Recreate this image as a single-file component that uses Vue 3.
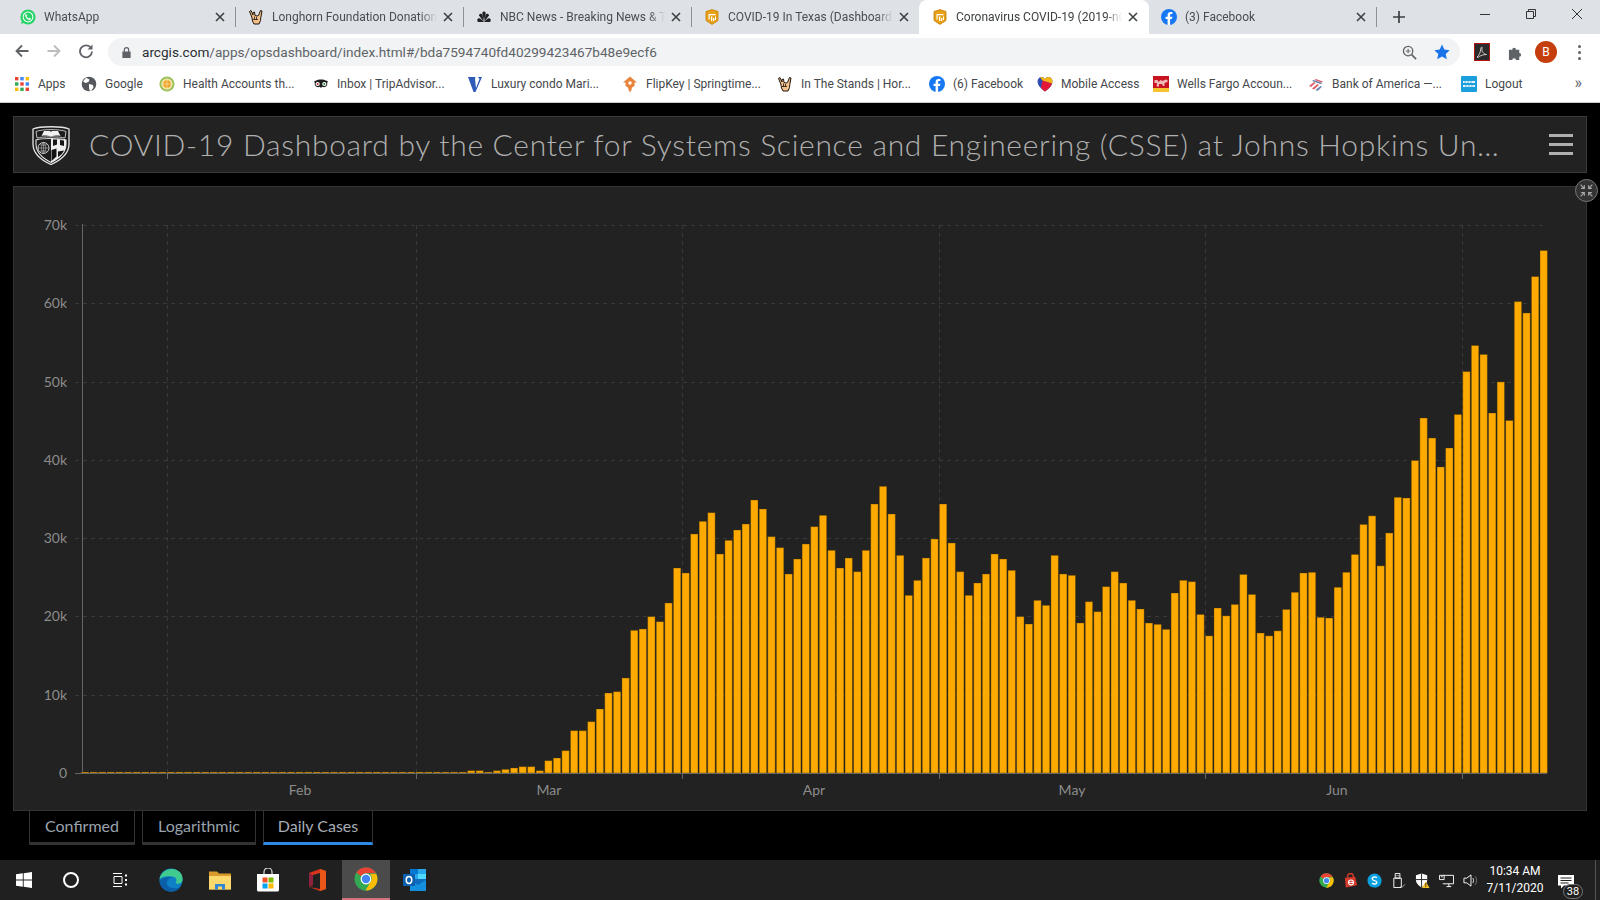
<script setup>
const tabs = [
  { title: 'WhatsApp', icon: 'whatsapp' },
  { title: 'Longhorn Foundation Donation', icon: 'horns' },
  { title: 'NBC News - Breaking News & Top Stories', icon: 'nbc' },
  { title: 'COVID-19 In Texas (Dashboard)', icon: 'dash' },
  { title: 'Coronavirus COVID-19 (2019-nCoV)', icon: 'dash', active: true },
  { title: '(3) Facebook', icon: 'fb' }
]

const bookmarks = [
  { label: 'Apps', icon: 'apps', w: 67 },
  { label: 'Google', icon: 'globe', w: 78 },
  { label: 'Health Accounts th...', icon: 'health', w: 154 },
  { label: 'Inbox | TripAdvisor...', icon: 'owl', w: 154 },
  { label: 'Luxury condo Mari...', icon: 'lux', w: 155 },
  { label: 'FlipKey | Springtime...', icon: 'flip', w: 155 },
  { label: 'In The Stands | Hor...', icon: 'horns', w: 152 },
  { label: '(6) Facebook', icon: 'fb', w: 108 },
  { label: 'Mobile Access', icon: 'sw', w: 116 },
  { label: 'Wells Fargo Accoun...', icon: 'wf', w: 155 },
  { label: 'Bank of America —...', icon: 'boa', w: 153 },
  { label: 'Logout', icon: 'amex', w: 70 }
]

const icons = {
  whatsapp: '<circle cx="8" cy="8" r="7.6" fill="#25d366"/><path d="M1 15l1.2-4 2.6 2.6z" fill="#25d366"/><circle cx="8" cy="8" r="5.4" fill="#fff"/><circle cx="8" cy="8" r="4.4" fill="#25d366"/><path d="M6 5c-.8.6-1 1.6-.4 2.9.7 1.4 2 2.6 3.400 3 1 .2 1.700-.3 2-1.200l-1.500-.9-.7.700c-1-.4-1.800-1.200-2.200-2.200l.6-.7z" fill="#fff"/>',
  horns: '<path d="M1.500 2.500 3 1.500 5 6V3.500L6.500 3 7 6.500 9 7l1.500-.5 2-5 1.500.5-1.200 6.500-.3 3-1.500 3.500H6L4.500 12 3.800 8z" fill="#f3c08c" stroke="#1c140c" stroke-width="1"/><path d="M6.500 7.500v3M8.500 8v2.500M5 10.500h5" stroke="#1c140c" stroke-width=".8" fill="none"/>',
  nbc: '<g fill="#1f2125"><path d="M8 13H2C.5 11.500 1.500 8.500 4 9.500L6.500 11.500z"/><path d="M7.500 12.500 3 6.500C3 4.500 5.500 4 6.500 5.500z"/><path d="M7.800 11.500 6.300 4C6.500 2 9.500 2 9.700 4L8.200 11.500z"/><path d="M8.500 12.500 9.500 5.500C10.500 4 13 4.500 13 6.500z"/><path d="M8 13l1.500-1.500L12 9.500c2.500-1 3.500 2 2 3.500z"/></g>',
  dash: '<path d="M8 .6 14 2.500v9L8 15.400 2 11.500v-9z" fill="#e8a116" stroke="#c47f06" stroke-width=".8"/><path d="M4.500 5h7v1.200H5.700v4.300H4.500z" fill="#fff"/><path d="M7 7.500h1.300V12H7zM9 9h1.300v3H9zM11 7.500h1V11h-1z" fill="#fff"/>',
  fb: '<circle cx="8" cy="8" r="8" fill="#1877f2"/><path d="M9.100 16V10.100h1.900l.4-2.400H9.100V6.300c0-.7.3-1.200 1.300-1.200h1V3c-.4 0-1-.1-1.800-.1-1.900 0-3 1.100-3 3.100v1.700H4.600v2.400h2V16z" fill="#fff"/>',
  apps: '<g><rect x="1" y="1" width="3.400" height="3.400" fill="#ea4335"/><rect x="6.300" y="1" width="3.400" height="3.400" fill="#4285f4"/><rect x="11.600" y="1" width="3.400" height="3.400" fill="#fbbc04"/><rect x="1" y="6.300" width="3.400" height="3.400" fill="#34a853"/><rect x="6.300" y="6.300" width="3.400" height="3.400" fill="#ea4335"/><rect x="11.600" y="6.300" width="3.400" height="3.400" fill="#4285f4"/><rect x="1" y="11.600" width="3.400" height="3.400" fill="#fbbc04"/><rect x="6.300" y="11.600" width="3.400" height="3.400" fill="#34a853"/><rect x="11.600" y="11.600" width="3.400" height="3.400" fill="#ea4335"/></g>',
  globe: '<circle cx="8" cy="8" r="7.300" fill="#54585d"/><path d="M5 1.800 8.500 3.500 7.500 6 4.500 7 2 5.500zM8 8l4 1 .5 2.500L10 15l-1.500-.5L8 11z" fill="#fff"/>',
  health: '<circle cx="8" cy="8" r="7.600" fill="#9ec25a"/><circle cx="8" cy="8" r="5.600" fill="#f3e3a4"/><circle cx="8" cy="8" r="3.800" fill="#f0a22a"/><path d="M8 4.200v7.600M4.200 8h7.600" stroke="#f7e3a8" stroke-width=".7"/>',
  owl: '<path d="M1 5.500 3 4.500C5 3 11 3 13 4.500l2 1-.8 1.300a3.500 3.500 0 0 1-5 4L8 12l-1.200-1.200a3.500 3.500 0 0 1-5-4z" fill="#1d1d1d"/><circle cx="4.700" cy="8" r="2.100" fill="#fff"/><circle cx="11.300" cy="8" r="2.100" fill="#fff"/><circle cx="4.700" cy="8" r="1" fill="#c33"/><circle cx="11.300" cy="8" r="1" fill="#2a8a45"/>',
  lux: '<path d="M1 1h7.500L8 3 9 12 12.500 3 11 1h4L8.500 16H6.500z" fill="#2f5cb8"/>',
  flip: '<path d="M8 .5 15 6.500h-2.500V10L10 11.500 9 15.500H7L6 11.500 3.500 10V6.500H1z" fill="#e9843c"/><circle cx="8" cy="7" r="1.700" fill="#fff"/>',
  sw: '<path d="M8 15.500C3 12 .5 9 .5 5.500.5 3 2.500 1 4.500 1c1.500 0 2.700.8 3.500 2 .8-1.200 2-2 3.500-2 2 0 4 2 4 4.500 0 3.500-2.500 6.500-7.500 10z" fill="#304cb2"/><path d="M5.500 4.500 15 7.500c-1 3-3.500 5.500-7 8C6.500 14.500 5 13 4 11.500z" fill="#e31837"/><path d="M4.500 1c1.500 0 2.700.8 3.500 2 .8-1.200 2-2 3.500-2 2 0 4 2 4 4.500l-.3 2L5.500 4.500 3 1.300z" fill="#f9b612"/>',
  wf: '<rect width="16" height="16" fill="#c8141e"/><rect y="12" width="16" height="4" fill="#f7c32e"/><path d="M1.500 4h3l1 2 2-2 2 1 3-1.500 2 .5v2l-3 1v3h-1.500L9 8H6v2.500H3.500L4 7H1.500z" fill="#efb9b9"/>',
  boa: '<path d="M1 10 6 6l1.500 1L3 11zM4 12.500 9.500 8l1.500 1-5 4.500zM8 3l7 2.500-1.500 1L6.500 4z" fill="#e0606a"/><path d="M5.500 4 4 5l8.500 3L14.500 7zM7.500 14l5-4 1.500.8L9.500 15z" fill="#6a80b0"/>',
  amex: '<rect width="16" height="16" rx="1" fill="#1b9fdc"/><path d="M2 5h12v2H2zM2 9h12v2H2z" fill="#fff" opacity=".9"/><path d="M4 5v2M7 5v2M10 5v2M5 9v2M8 9v2M11 9v2" stroke="#1b9fdc" stroke-width=".7"/>'
}

const AXIS_Y = 773
const PX_PER_10K = 78.3
const DAY_W = 8.58
const X0 = 81

// Bar tops read from the picture, 1/3 px above the chart's baseline reference 910.
const midTops = [903,903,907,903,899,895,891,891,903,873,865,843,783,783,756,718,670,666,625,482,478,441,456,400,295,310,193,155,129,253,212,181,163,91,118,201,234,313,268,223,171,137,242,295,265,306,242,103,50,133,257,377,332,265,208,103,220,306,377,340,313,253,268,302,441,463,392,407,257,313,317,460,396,426,351,306,340,392,418,460,464,479,370,332,336]
// Same for June onward, at 2.8 units per px above 1520.
const lateTops = [1076,1136,1058,1080,1048,964,1020,1128,1136,1122,1062,1014,960,958,1084,1086,1000,958,908,824,800,940,848,748,750,645,526,582,663,610,516,396,323,348,512,425,533,200,232,130,57]

const heights = [
  ...Array.from({ length: 45 }, () => 1),
  ...midTops.map(t => (910 - t) / 3),
  ...lateTops.map(t => (1520 - t) / 2.8)
]

const bars = heights.map((h, i) => ({
  x: X0 + i * DAY_W + 0.4,
  y: AXIS_Y - h,
  h
}))

const yTicks = [0, 1, 2, 3, 4, 5, 6, 7].map(n => ({
  label: n === 0 ? '0' : `${n}0k`,
  y: Math.round(AXIS_Y - n * PX_PER_10K) + 0.5
}))

const monthLines = [10, 39, 70, 100, 131, 161].map(i => Math.round(X0 + i * DAY_W) + 0.5)
const months = [
  { label: 'Feb', x: 300 },
  { label: 'Mar', x: 549 },
  { label: 'Apr', x: 814 },
  { label: 'May', x: 1072 },
  { label: 'Jun', x: 1337 }
]

const viewTabs = [
  { label: 'Confirmed', cls: 'w1' },
  { label: 'Logarithmic', cls: 'w2' },
  { label: 'Daily Cases', cls: 'w3', active: true }
]
</script>

<template>
  <div class="screen">
    <div class="tabstrip">
      <div v-for="t in tabs" :key="t.title" class="tab" :class="{ active: t.active }">
        <svg class="ico" viewBox="0 0 16 16" v-html="icons[t.icon]"></svg>
        <span class="tab-title">{{ t.title }}</span>
        <svg class="tab-x" viewBox="0 0 10 10"><path d="M1 1l8 8M9 1l-8 8" stroke="#3c4043" stroke-width="1.600"/></svg>
      </div>
      <svg class="plus" viewBox="0 0 14 14"><path d="M7 1v12M1 7h12" stroke="#3c4043" stroke-width="1.700"/></svg>
      <div class="winctl">
        <svg viewBox="0 0 12 12"><path d="M1 6.500h10" stroke="#333" stroke-width="1"/></svg>
        <svg viewBox="0 0 12 12"><path d="M1.500 3.500h7v7h-7zM3.500 3.500v-2h7v7h-2" fill="none" stroke="#333" stroke-width="1"/></svg>
        <svg viewBox="0 0 12 12"><path d="M1 1l10 10M11 1L1 11" stroke="#333" stroke-width="1"/></svg>
      </div>
    </div>

    <div class="toolbar">
      <svg class="nav" viewBox="0 0 16 16"><path d="M14.500 8H2.500M8 2.500 2.500 8 8 13.500" fill="none" stroke="#5f6368" stroke-width="1.800"/></svg>
      <svg class="nav" viewBox="0 0 16 16"><path d="M1.500 8h12M8 2.500 13.500 8 8 13.500" fill="none" stroke="#babcbe" stroke-width="1.800"/></svg>
      <svg class="nav" viewBox="0 0 16 16"><path d="M13 5a6 6 0 1 0 1 3.500" fill="none" stroke="#5f6368" stroke-width="1.800"/><path d="M14.500 1.500v5h-5z" fill="#5f6368"/></svg>
      <div class="omnibox">
        <svg class="lock" viewBox="0 0 12 14"><path d="M3 6V4a3 3 0 0 1 6 0v2h1.500v7h-9V6zM4.300 6h3.400V4a1.700 1.700 0 0 0-3.400 0z" fill="#5f6368"/></svg>
        <span class="url">arcgis.com<span class="url-rest">/apps/opsdashboard/index.html#/bda7594740fd40299423467b48e9ecf6</span></span>
        <svg class="omni-zoom" viewBox="0 0 16 16"><circle cx="6.500" cy="6.500" r="5" fill="none" stroke="#5f6368" stroke-width="1.400"/><path d="M10.300 10.300 15 15" stroke="#5f6368" stroke-width="1.800"/><path d="M6.500 4v5M4 6.500h5" stroke="#5f6368" stroke-width="1"/></svg>
        <svg class="star" viewBox="0 0 16 16"><path d="M8 .6l2.300 5 5.400.6-4 3.700 1.100 5.400L8 12.600l-4.800 2.700 1.100-5.400-4-3.700 5.400-.6z" fill="#1a73e8"/></svg>
      </div>
      <svg class="ext-pdf" viewBox="0 0 16 18"><rect x=".5" y=".5" width="15" height="17" fill="#2b2b2b" stroke="#b3140e"/><path d="M3 14c2-1.500 3.500-4.500 4-9 .2-1.500 1.500-1 1 .5-.6 3 1.500 5.500 4.500 6-3 0-6.500 1-8.500 3z" fill="none" stroke="#e6d8d8" stroke-width=".9"/></svg>
      <svg class="ext-puzzle" viewBox="0 0 16 16"><path d="M1 5h3.500a2 2 0 1 1 4 0H12v3.500a2 2 0 1 1 0 4V16H8.500a2 2 0 1 0-4 0H1z" fill="#5f6368"/></svg>
      <div class="avatar">B</div>
      <div class="kebab"><i></i><i></i><i></i></div>
    </div>

    <div class="bookmarks">
      <div v-for="b in bookmarks" :key="b.label" class="bm" :style="{ width: b.w + 'px' }">
        <svg class="ico" viewBox="0 0 16 16" v-html="icons[b.icon]"></svg>
        <span>{{ b.label }}</span>
      </div>
      <span class="more">»</span>
    </div>

    <main class="page">
      <header class="titlebar">
        <svg class="logo" viewBox="0 0 38 40">
          <path d="M1 4C8 1 30 1 37 4V19c0 10-9 16.500-18 20.500C10 35.500 1 29 1 19z" fill="#1c1c1c" stroke="#e4e4e4" stroke-width="1.300"/>
          <path d="M4 6.500C10 4 28 4 34 6.500L33 13C28 11.500 10 11.500 5 13z" fill="none" stroke="#cfcfcf" stroke-width=".9"/>
          <path d="M9.500 11 12 6h6l1 1 1-1h6l2.500 5c-3-.7-6.500-.5-9.500.5-3-1-6.500-1.200-9.500-.5z" fill="#f2f2f2"/>
          <path d="M4 15C10 13 28 13 34 15V19C34 28 27 33.500 19 37.500 11 33.500 4 28 4 19z" fill="#1c1c1c" stroke="#e4e4e4" stroke-width="1.100"/>
          <path d="M19 14v23.500C27 33.500 34 28 34 19v-4c-4-.8-10-1.200-15-1z" fill="#eee"/>
          <path d="M21 14.500v6.500l4-1.500v-5zM28 15v5l4 1v-5.500zM19.500 25l5-1.500 0 8-5 4.500zM26 26.500l6-1c-1 2.500-3 4.500-6 6.500z" fill="#141414"/>
          <circle cx="11.500" cy="23" r="5.500" fill="none" stroke="#ddd" stroke-width=".9"/>
          <path d="M6 23h11M11.500 17.500v11M7.500 19.500c2.500 1 5.500 1 8 0M7.500 26.500c2.500-1 5.500-1 8 0M11.500 17.500c-3 3-3 8 0 11M11.500 17.500c3 3 3 8 0 11" fill="none" stroke="#ccc" stroke-width=".55"/>
        </svg>
        <h1 class="title">COVID-19 Dashboard by the Center for Systems Science and Engineering (CSSE) at Johns Hopkins Un…</h1>
        <div class="burger"><i></i><i></i><i></i></div>
      </header>

      <section class="chart-panel">
        <button class="collapse" aria-label="Collapse">
          <svg viewBox="0 0 14 14"><path d="M1.500 1.500 5 5M5 2v3H2M12.500 1.500 9 5M9 2v3h3M1.500 12.500 5 9M5 12V9H2M12.500 12.500 9 9M9 12V9h3" fill="none" stroke="#aaa" stroke-width="1"/></svg>
        </button>
        <svg class="chart" viewBox="14 187 1572 623">
          <g v-for="t in yTicks" :key="t.label">
            <line x1="75" :x2="1547" :y1="t.y" :y2="t.y" class="grid"/>
            <text x="67" :y="t.y + 4.500" text-anchor="end" class="axis-label">{{ t.label }}</text>
          </g>
          <line v-for="x in monthLines" :key="x" :x1="x" :x2="x" y1="225" y2="773" class="grid"/>
          <line x1="82.500" x2="82.500" y1="224" y2="773" class="axis"/>
          <rect v-for="(b, i) in bars" :key="i" :x="b.x" :y="b.y" width="7.400" :height="b.h" class="bar"/>
          <line x1="75" x2="1547" y1="773.500" y2="773.500" class="axis"/>
          <line v-for="x in monthLines" :key="'t' + x" :x1="x" :x2="x" y1="773" y2="779" class="axis"/>
          <text v-for="m in months" :key="m.label" :x="m.x" y="795" text-anchor="middle" class="axis-label">{{ m.label }}</text>
        </svg>
      </section>

      <nav class="view-tabs">
        <div v-for="v in viewTabs" :key="v.label" class="view-tab" :class="[v.cls, { active: v.active }]">{{ v.label }}</div>
      </nav>
    </main>

    <footer class="taskbar">
      <svg class="tb-win" viewBox="0 0 16 16"><path d="M0 2.300 6.800 1.300v6.300H0zM7.700 1.200 16 0v7.600H7.700zM0 8.400h6.800v6.300L0 13.700zM7.700 8.400H16V16l-8.300-1.200z" fill="#fff"/></svg>
      <div class="tb-cortana"></div>
      <svg class="tb-view" viewBox="0 0 16 16"><path d="M1 1.500h9M1 14.500h9M2 4.500h8v7H2z" fill="none" stroke="#fff"/><path d="M13 2.500h2v2h-2zM13 7h2v2h-2zM13 11.500h2v2h-2z" fill="#fff"/></svg>
      <svg class="tb-app edge" viewBox="0 0 24 24">
        <circle cx="12" cy="12" r="11.500" fill="#0f7fc6"/>
        <path d="M.5 11C2 3 11-1.500 18.500 2.500c4 2 5.500 6 5 10-.3 3-4.500 4-7 2.500 2-2.500 1-6-3-6.500C9 8 4.500 7.500.5 11z" fill="#3fcb8e"/>
        <path d="M8 16c-.5-3 1.500-6 5-6.500-3-1-9-.5-12.500 3.500C1 20 7 24 13 23.500c3.500 0 6-1.500 8-4-4.500 1.500-12 1-13-3.500z" fill="#0b5fa8"/>
      </svg>
      <svg class="tb-app folder" viewBox="0 0 24 24">
        <path d="M1 3.500h8l2 2h12v16H1z" fill="#d99b2b"/>
        <path d="M1 8h22v13.500H1z" fill="#fbd96f"/>
        <path d="M7 21.500V16h10v5.500h-3v-3h-4v3z" fill="#2f86d4"/>
      </svg>
      <svg class="tb-app store" viewBox="0 0 24 24">
        <path d="M8 6V4a4 4 0 0 1 8 0v2" fill="none" stroke="#ddd" stroke-width="1.200"/>
        <path d="M1 6h22v16a1.500 1.500 0 0 1-1.500 1.500h-19A1.500 1.500 0 0 1 1 22z" fill="#fff"/>
        <rect x="6.500" y="9.500" width="5" height="5" fill="#f25022"/><rect x="12.500" y="9.500" width="5" height="5" fill="#7fba00"/>
        <rect x="6.500" y="15.500" width="5" height="5" fill="#00a4ef"/><rect x="12.500" y="15.500" width="5" height="5" fill="#ffb900"/>
      </svg>
      <svg class="tb-app office" viewBox="0 0 24 24">
        <path d="M4 5 15 1l6 2v18l-6 2-11-4 11 2V5L8 7v10l-4 2z" fill="#d8351b"/>
        <path d="M15 1l6 2v18l-6 2z" fill="#e8561a"/>
        <path d="M4 5l4 2v10l-4 2z" fill="#8f2240"/>
      </svg>
      <div class="tb-active">
        <svg class="tb-chrome" viewBox="0 0 24 24">
          <circle cx="12" cy="12" r="11.500" fill="#34a853"/>
          <path d="M12 .5A11.500 11.500 0 0 1 22 6.300H12a5.700 5.700 0 0 0-5 3L2.500 5.500A11.500 11.500 0 0 1 12 .5z" fill="#ea4335"/>
          <path d="M22.300 7A11.500 11.500 0 0 1 11.500 23.500l5-8.700A5.700 5.700 0 0 0 16 7z" fill="#fbbc04"/>
          <circle cx="12" cy="12" r="5.400" fill="#fff"/><circle cx="12" cy="12" r="4.200" fill="#4285f4"/>
        </svg>
      </div>
      <svg class="tb-app outlook" viewBox="0 0 24 24">
        <rect x="7" y="1" width="16" height="10" fill="#28a8ea"/><rect x="7" y="1" width="8" height="5" fill="#0078d4"/><rect x="15" y="6" width="8" height="5" fill="#50d9ff"/>
        <path d="M7 11h16v12H7z" fill="#0f6cbd"/><path d="M7 12l8 5 8-5v11H7z" fill="#1490df"/>
        <rect x="0" y="6" width="12" height="12" fill="#0d5fb0"/><ellipse cx="6" cy="12" rx="2.800" ry="3.400" fill="none" stroke="#fff" stroke-width="1.500"/>
      </svg>

      <div class="tray">
        <svg class="tr" viewBox="0 0 24 24">
          <circle cx="12" cy="12" r="11.500" fill="#34a853"/>
          <path d="M12 .5A11.500 11.500 0 0 1 22 6.300H12a5.700 5.700 0 0 0-5 3L2.500 5.500A11.500 11.500 0 0 1 12 .5z" fill="#ea4335"/>
          <path d="M22.300 7A11.500 11.500 0 0 1 11.500 23.500l5-8.700A5.700 5.700 0 0 0 16 7z" fill="#fbbc04"/>
          <circle cx="12" cy="12" r="5.400" fill="#fff"/><circle cx="12" cy="12" r="4.200" fill="#4285f4"/>
        </svg>
        <svg class="tr" viewBox="0 0 16 16"><path d="M5 5V3.500a3 3 0 0 1 6 0V5" fill="none" stroke="#d63a2a" stroke-width="1.500"/><path d="M2 5 13 4 15 13 3 15.500z" fill="#d63a2a"/><ellipse cx="8.500" cy="10" rx="2.700" ry="2.600" fill="none" stroke="#fff" stroke-width="1.200"/><path d="M6 10h5" stroke="#fff"/></svg>
        <svg class="tr" viewBox="0 0 16 16"><path d="M8 .5a7.500 7.500 0 0 1 7.500 7.500c0 7-6 8-7.500 7.500C1.500 15.500.5 9.500.5 8A7.500 7.500 0 0 1 8 .5z" fill="#0a9fe0"/><path d="M10.500 5C9 3.500 5.500 4 5.500 6.200c0 2.500 5 1.500 5 3.800 0 2-3.500 2.200-5 .8" fill="none" stroke="#fff" stroke-width="1.500"/></svg>
        <svg class="tr" viewBox="0 0 16 16"><path d="M4.500.5h5v5h-5zM3 5.500h8v10H3z" fill="none" stroke="#fff"/><path d="M6 2h.8v1.500H6zM8 2h.8v1.500H8z" fill="#fff"/><path d="M10 14l1.500 1.500L15 12" fill="none" stroke="#aaa"/></svg>
        <svg class="tr" viewBox="0 0 16 16"><path d="M7 .5 1 2.500v5c0 3.500 3 6 6 8 3-2 6-4.500 6-8v-5z" fill="#fff"/><path d="M7 .5v15M1 7h12" stroke="#202020" stroke-width="1"/><path d="M11.500 9l4 7h-8z" fill="#f7c325"/><path d="M11.500 11v2.500M11.500 14v1" stroke="#222" stroke-width="1"/></svg>
        <svg class="tr" viewBox="0 0 16 16"><path d="M4 2.500h11.500v9H4M8 14.500h5M10.500 11.500v3" fill="none" stroke="#fff"/><path d="M.5 2.500h5v4.500h-5z" fill="#202020" stroke="#fff"/><path d="M2 4h2" stroke="#fff"/></svg>
        <svg class="tr" viewBox="0 0 16 16"><path d="M1 5.500h3L8.500 2v12L4 10.500H1z" fill="none" stroke="#fff"/><path d="M10.500 5.500c1 1.500 1 3.500 0 5" fill="none" stroke="#fff"/><path d="M13 3.500c2 2.500 2 6.500 0 9" fill="none" stroke="#777"/></svg>
      </div>
      <div class="clock"><span>10:34 AM</span><span>7/11/2020</span></div>
      <div class="notif">
        <svg viewBox="0 0 16 15"><path d="M0 0h16v10.500H6l-3 3v-3H0z" fill="#fff"/><path d="M2.500 3h11M2.500 5.500h11M2.500 8h8" stroke="#202020"/></svg>
        <span class="badge">38</span>
      </div>
      <div class="show-desktop"></div>
    </footer>
  </div>
</template>

<style scoped>
.screen {
  width: 1600px;
  height: 900px;
  display: flex;
  flex-direction: column;
  overflow: hidden;
  background: #000;
  font-family: Roboto, "Liberation Sans", sans-serif;
}
.tabstrip {
  height: 34px;
  flex: none;
  display: flex;
  align-items: stretch;
  background: #dee1e6;
  padding-left: 8px;
  position: relative;
}
.tab {
  width: 228px;
  flex: none;
  box-sizing: border-box;
  padding: 0 7px 0 12px;
  display: flex;
  align-items: center;
  position: relative;
  font-size: 12px;
  color: #4a4d51;
}
.tab::after {
  content: "";
  position: absolute;
  right: 0;
  top: 7px;
  bottom: 7px;
  width: 1px;
  background: #8f9296;
}
.tab.active {
  background: #fff;
  border-radius: 8px 8px 0 0;
  color: #3c4043;
  margin-left: -1px;
  width: 230px;
  padding-left: 13px;
}
.tab:nth-child(4)::after, .tab.active::after { display: none; }
.ico { width: 16px; height: 16px; flex: none; }
.tab-title {
  flex: 1;
  margin-left: 8px;
  white-space: nowrap;
  overflow: hidden;
  -webkit-mask-image: linear-gradient(90deg, #000 90%, transparent);
  mask-image: linear-gradient(90deg, #000 90%, transparent);
}
.tab-x { width: 10px; height: 10px; flex: none; margin: 0 4px 0 6px; }
.plus { width: 14px; height: 14px; margin: 10px 0 0 15px; flex: none; }
.winctl {
  margin-left: auto;
  display: flex;
  gap: 34px;
  padding: 8px 17px 0 0;
}
.winctl svg { width: 12px; height: 12px; }
.toolbar {
  height: 34px;
  flex: none;
  background: #fff;
  display: flex;
  align-items: center;
  padding-left: 14px;
  position: relative;
}
.nav { width: 16px; height: 16px; margin-right: 16px; flex: none; }
.omnibox {
  width: 1352px;
  height: 28px;
  margin-left: -2px;
  margin-top: 2px;
  margin-right: 14px;
  border-radius: 14px;
  background: #f1f3f4;
  display: flex;
  align-items: center;
  padding-left: 13px;
  box-sizing: border-box;
  flex: none;
}
.lock { width: 11px; height: 13px; flex: none; }
.url {
  margin-left: 10px;
  font-size: 13.6px;
  color: #2c2e31;
  white-space: nowrap;
}
.url-rest { color: #5f6368; }
.omni-zoom { width: 15px; height: 15px; margin-left: auto; }
.star { width: 16px; height: 16px; margin: 0 10px 0 17px; }
.ext-pdf { width: 16px; height: 18px; flex: none; margin-top: 2px; }
.ext-puzzle { width: 15px; height: 15px; flex: none; margin: 2px 0 0 18px; }
.avatar {
  width: 22px;
  height: 22px;
  border-radius: 50%;
  background: #c53e0d;
  color: #fff;
  font-size: 12px;
  display: flex;
  align-items: center;
  justify-content: center;
  margin: 2px 0 0 12px;
  flex: none;
}
.kebab {
  display: flex;
  flex-direction: column;
  gap: 3px;
  margin: 2px 0 0 21px;
}
.kebab i {
  width: 3px;
  height: 3px;
  border-radius: 50%;
  background: #5f6368;
}
.bookmarks {
  height: 32px;
  flex: none;
  background: #fff;
  border-bottom: 1px solid #c9cacc;
  padding: 0 0 2px 14px;
  display: flex;
  align-items: center;
  position: relative;
  font-size: 12px;
  color: #45484c;
}
.bm {
  display: flex;
  align-items: center;
  gap: 8px;
  flex: none;
  white-space: nowrap;
}
.more {
  position: absolute;
  right: 18px;
  top: 5px;
  font-size: 16px;
  color: #5f6368;
}
.page {
  flex: 1;
  min-height: 0;
  display: flex;
  flex-direction: column;
  padding: 13px 13px 0;
  font-family: Lato, "Liberation Sans", sans-serif;
}
.titlebar {
  height: 57px;
  box-sizing: border-box;
  flex: none;
  background: #222;
  border: 1px solid #3a3a3a;
  display: flex;
  align-items: center;
  padding: 0 13px 0 18px;
}
.logo { width: 38px; height: 40px; flex: none; }
.title {
  flex: 1;
  margin: 0 0 2px 19px;
  font-size: 30px;
  font-weight: 300;
  color: #b0b0b0;
  white-space: nowrap;
  letter-spacing: .71px;
  overflow: hidden;
}
.burger { display: flex; flex-direction: column; gap: 6px; width: 24px; flex: none; }
.burger i { height: 3px; background: #b0b0b0; }
.chart-panel {
  height: 625px;
  box-sizing: border-box;
  flex: none;
  margin-top: 13px;
  background: #222;
  border: 1px solid #333;
  position: relative;
}
.chart { display: block; width: 1572px; height: 623px; }
.collapse {
  position: absolute;
  right: -12px;
  top: -8px;
  width: 23px;
  height: 23px;
  padding: 3px;
  border-radius: 50%;
  box-sizing: border-box;
  background: #333;
  border: 1px solid #777;
  display: flex;
}
.collapse svg { width: 100%; height: 100%; }
.grid { stroke: #393939; stroke-width: 1; stroke-dasharray: 4 4; }
.axis { stroke: #666; stroke-width: 1; }
.bar { fill: #ffaa00; stroke: rgba(60, 45, 10, .35); stroke-width: 1; }
.axis-label { fill: #8c8c8c; font-size: 14px; font-family: Lato, "Liberation Sans", sans-serif; }
.view-tabs { display: flex; gap: 7px; margin-left: 16px; }
.view-tab {
  height: 34px;
  box-sizing: border-box;
  border: 1px solid #333;
  border-top: 0;
  border-bottom: 3px solid #333;
  padding-bottom: 2px;
  display: flex;
  align-items: center;
  justify-content: center;
  font-size: 16px;
  color: #9aa3ad;
}
.w1 { width: 106px; }
.w2 { width: 114px; }
.w3 { width: 110px; }
.view-tab.active { border-bottom-color: #2b8be6; color: #a6adb5; }
.taskbar {
  height: 40px;
  flex: none;
  background: #202020;
  display: flex;
  align-items: center;
  position: relative;
  color: #fff;
}
.tb-win { width: 16px; height: 16px; margin-left: 16px; flex: none; }
.tb-cortana {
  width: 16px;
  height: 16px;
  box-sizing: border-box;
  border: 2px solid #fff;
  border-radius: 50%;
  margin-left: 31px;
  flex: none;
}
.tb-view { width: 16px; height: 16px; margin-left: 33px; flex: none; }
.tb-app { width: 24px; height: 24px; flex: none; }
.edge { margin-left: 31px; }
.folder { margin-left: 25px; }
.store { margin-left: 24px; }
.office { margin-left: 25px; }
.tb-active {
  width: 48px;
  height: 40px;
  margin-left: 13px;
  box-sizing: border-box;
  background: #4b4b4b;
  border-bottom: 2px solid #d3747c;
  display: flex;
  align-items: center;
  justify-content: center;
  flex: none;
}
.tb-chrome { width: 24px; height: 24px; }
.outlook { margin-left: 13px; }
.tray { margin-left: auto; display: flex; align-items: center; }
.tr { width: 15px; height: 15px; flex: none; margin-left: 9px; }
.clock {
  width: 62px;
  margin: 0 0 0 6px;
  display: flex;
  flex-direction: column;
  align-items: center;
  font-size: 12px;
  line-height: 17px;
}
.notif { position: relative; width: 17px; height: 15px; margin: 5px 25px 0 12px; flex: none; }
.notif svg { display: block; width: 16px; height: 15px; }
.badge {
  position: absolute;
  left: 5px;
  top: 9px;
  width: 20px;
  height: 15px;
  box-sizing: border-box;
  border-radius: 8px;
  border: 1px solid #777;
  background: #202020;
  font-size: 11px;
  line-height: 13px;
  text-align: center;
}
.show-desktop {
  position: absolute;
  right: 4px;
  top: 0;
  bottom: 0;
  width: 1px;
  background: #555;
}
</style>
<style>
html, body { margin: 0; background: #000; }
</style>
